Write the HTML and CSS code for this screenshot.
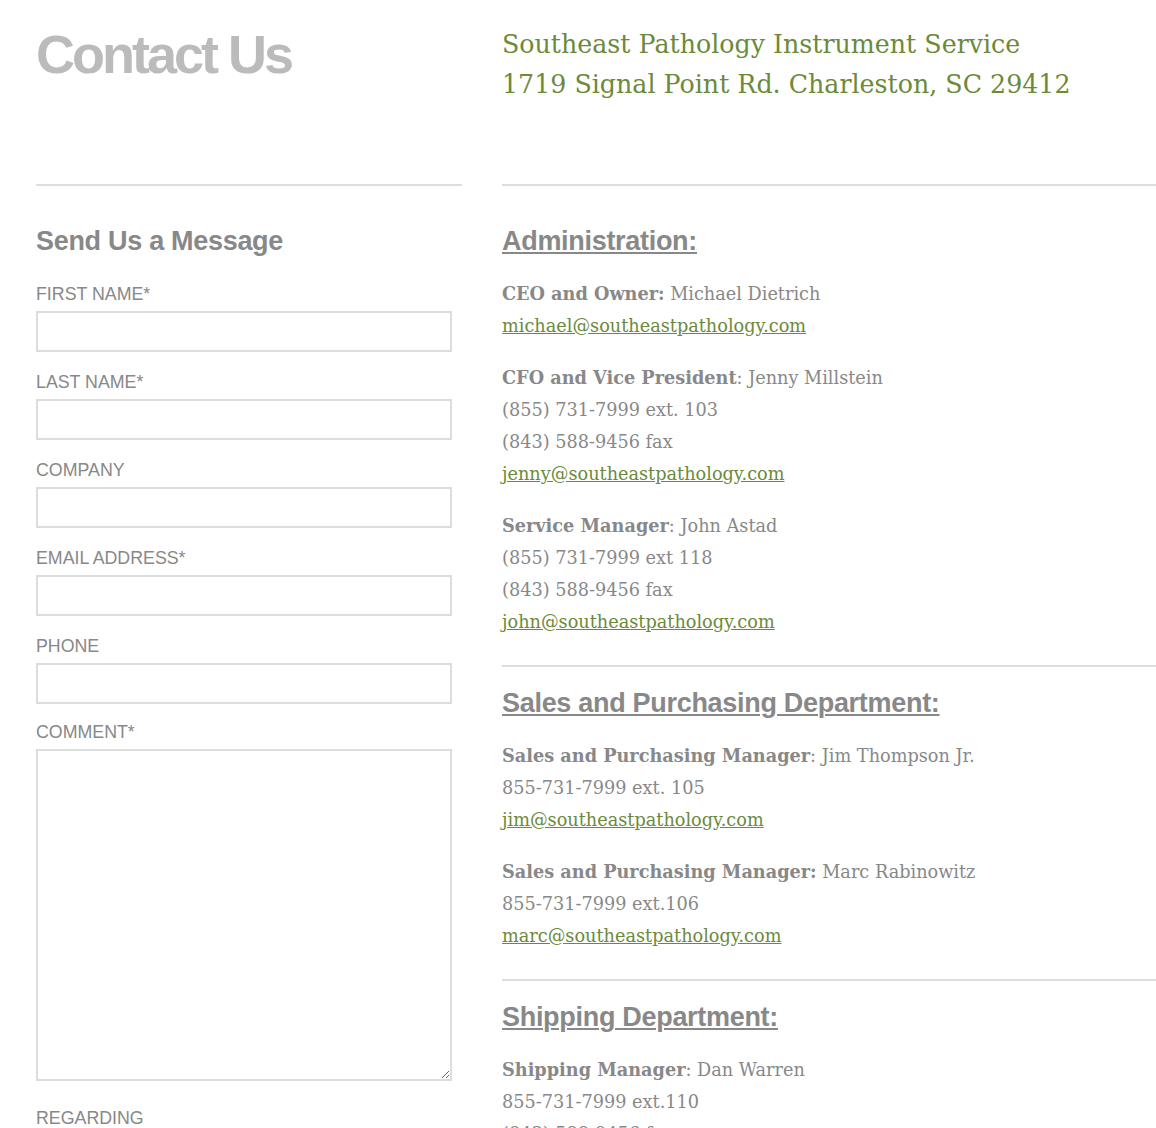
FILE: index.html
```html
<!DOCTYPE html>
<html>
<head>
<meta charset="utf-8">
<title>Contact Us</title>
<link rel="stylesheet" href="styles.css">
</head>
<body>
<div class="page">
  <div class="col left">
    <div class="top">
      <h1 class="page-title">Contact Us</h1>
    </div>
    <hr class="rule">
    <h2 class="section-title">Send Us a Message</h2>
    <form class="form">
      <label class="field"><span class="label">FIRST NAME*</span><input class="input" type="text"></label>
      <label class="field"><span class="label">LAST NAME*</span><input class="input" type="text"></label>
      <label class="field"><span class="label">COMPANY</span><input class="input" type="text"></label>
      <label class="field"><span class="label">EMAIL ADDRESS*</span><input class="input" type="text"></label>
      <label class="field"><span class="label">PHONE</span><input class="input" type="text"></label>
      <label class="field comment"><span class="label">COMMENT*</span><textarea class="textarea"></textarea></label>
      <label class="field"><span class="label">REGARDING</span></label>
    </form>
  </div>
  <div class="col right">
    <div class="top">
      <p class="company">Southeast Pathology Instrument Service<br>1719 Signal Point Rd. Charleston, SC 29412</p>
    </div>
    <hr class="rule">
    <section class="dept first">
      <h2 class="dept-title">Administration:</h2>
      <p class="entry"><b>CEO and Owner:</b> Michael Dietrich<br><a href="#">michael@southeastpathology.com</a></p>
      <p class="entry"><b>CFO and Vice President</b>: Jenny Millstein<br>(855) 731-7999 ext. 103<br>(843) 588-9456 fax<br><a href="#">jenny@southeastpathology.com</a></p>
      <p class="entry"><b>Service Manager</b>: John Astad<br>(855) 731-7999 ext 118<br>(843) 588-9456 fax<br><a href="#">john@southeastpathology.com</a></p>
    </section>
    <hr class="rule">
    <section class="dept">
      <h2 class="dept-title">Sales and Purchasing Department:</h2>
      <p class="entry"><b>Sales and Purchasing Manager</b>: Jim Thompson Jr.<br>855-731-7999 ext. 105<br><a href="#">jim@southeastpathology.com</a></p>
      <p class="entry"><b>Sales and Purchasing Manager:</b> Marc Rabinowitz<br>855-731-7999 ext.106<br><a href="#">marc@southeastpathology.com</a></p>
    </section>
    <hr class="rule">
    <section class="dept">
      <h2 class="dept-title">Shipping Department:</h2>
      <p class="entry"><b>Shipping Manager</b>: Dan Warren<br>855-731-7999 ext.110<br>(843) 588-9456 fax</p>
    </section>
  </div>
</div>
</body>
</html>
```

FILE: styles.css
```css
html, body {
  margin: 0;
  padding: 0;
  background: #fff;
}
body {
  font-family: "DejaVu Serif", Georgia, serif;
  color: #888;
}
.page {
  display: grid;
  grid-template-columns: 426px 1fr;
  column-gap: 40px;
  padding-left: 36px;
}
.col {
  min-width: 0;
}
.top {
  height: 184px;
}
.page-title {
  margin: 0;
  padding-top: 24px;
  font-family: "Liberation Sans", Arial, sans-serif;
  font-weight: bold;
  font-size: 54px;
  line-height: 60px;
  letter-spacing: -3px;
  color: #bbb;
}
.company {
  margin: 0;
  padding-top: 25px;
  font-size: 25.3px;
  line-height: 40px;
  color: #6b8a3a;
}
.rule {
  margin: 0;
  border: 0;
  height: 2px;
  background: #ddd;
}
.section-title, .dept-title {
  margin: 0;
  padding-top: 19px;
  font-family: "Liberation Sans", Arial, sans-serif;
  font-weight: bold;
  font-size: 27px;
  line-height: 34px;
  letter-spacing: -0.3px;
  color: #888;
}
.section-title,
.dept.first .dept-title {
  padding-top: 38px;
}
.dept-title {
  text-decoration: underline;
  text-decoration-thickness: 2px;
  text-underline-offset: 2px;
}
.form {
  display: flex;
  flex-direction: column;
  padding-top: 26px;
}
.field {
  display: flex;
  flex-direction: column;
  margin-bottom: 20px;
}
.field.comment {
  margin-top: -2px;
  margin-bottom: 27px;
}
.label {
  font-family: "Liberation Sans", Arial, sans-serif;
  font-size: 17.8px;
  line-height: 20px;
  color: #888;
  margin-bottom: 7px;
}
.input, .textarea {
  box-sizing: border-box;
  width: 416px;
  margin: 0;
  border: 2px solid #ddd;
  background: #fff;
  outline: none;
}
.input {
  height: 41px;
}
.textarea {
  height: 332px;
  resize: both;
}
.dept {
  padding-bottom: 27px;
}
.entry {
  margin: 20px 0 0;
  font-size: 17.7px;
  line-height: 32px;
  color: #888;
}
.entry b {
  font-weight: bold;
}
.entry a {
  color: #6b8a3a;
  text-decoration: underline;
}
```
